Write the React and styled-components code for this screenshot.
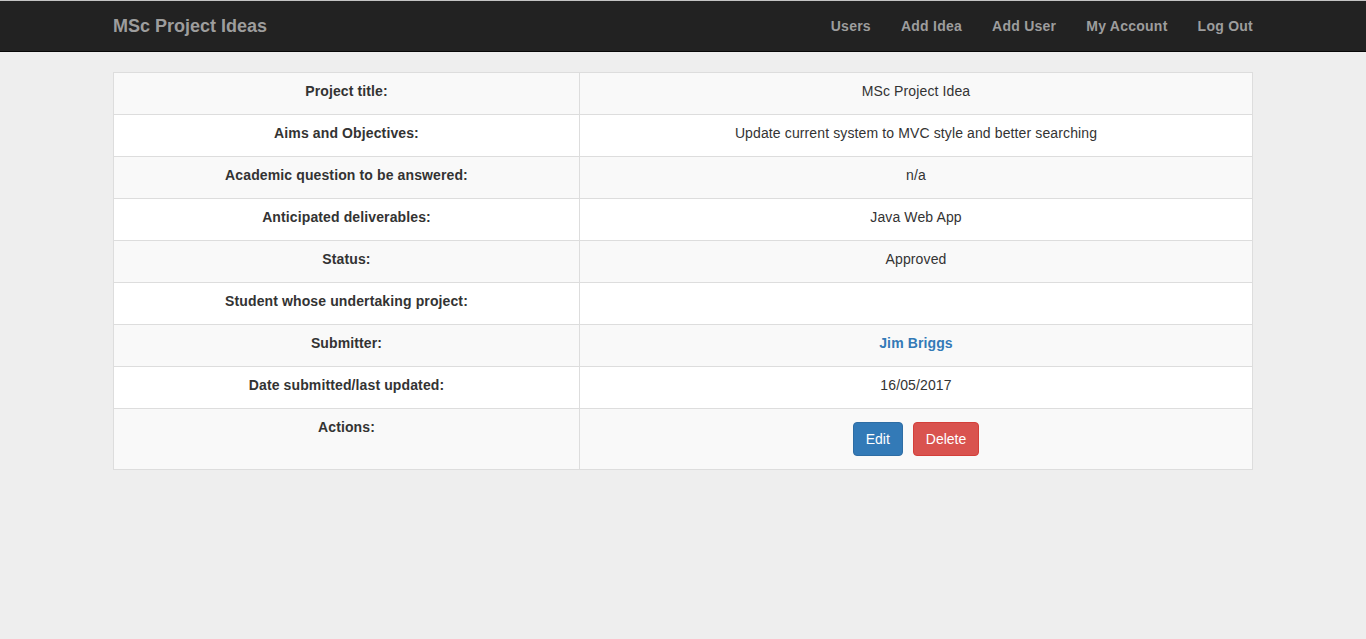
import React from "react";
import styled, { createGlobalStyle } from "styled-components";

const GlobalStyle = createGlobalStyle`
  html, body {
    margin: 0;
    padding: 0;
    background: #eeeeee;
    font-family: "Liberation Sans", Arial, Helvetica, sans-serif;
    font-size: 14px;
    line-height: 20px;
    color: #333333;
    letter-spacing: 0.12px;
  }
  * {
    box-sizing: border-box;
  }
`;

const rows = [
  { label: "Project title:", value: "MSc Project Idea" },
  {
    label: "Aims and Objectives:",
    value: "Update current system to MVC style and better searching",
  },
  { label: "Academic question to be answered:", value: "n/a" },
  { label: "Anticipated deliverables:", value: "Java Web App" },
  { label: "Status:", value: "Approved" },
  { label: "Student whose undertaking project:", value: "" },
  { label: "Submitter:", value: "Jim Briggs", link: true },
  { label: "Date submitted/last updated:", value: "16/05/2017" },
];

const App = () => {
  return (
    <Page>
      <GlobalStyle />
      <Navbar>
        <Container>
          <Brand href="#">MSc Project Ideas</Brand>
          <NavLinks>
            <NavLink href="#">Users</NavLink>
            <NavLink href="#">Add Idea</NavLink>
            <NavLink href="#">Add User</NavLink>
            <NavLink href="#">My Account</NavLink>
            <NavLink href="#" last>
              Log Out
            </NavLink>
          </NavLinks>
        </Container>
      </Navbar>
      <Main>
        <DetailTable>
          <tbody>
            {rows.map((row, i) => (
              <Row key={row.label} striped={i % 2 === 0}>
                <Label>{row.label}</Label>
                <Value>
                  {row.link ? <UserLink href="#">{row.value}</UserLink> : row.value}
                </Value>
              </Row>
            ))}
            <Row striped>
              <Label>Actions:</Label>
              <Value>
                <Actions>
                  <Button variant="primary">Edit</Button>
                  <Button variant="danger">Delete</Button>
                </Actions>
              </Value>
            </Row>
          </tbody>
        </DetailTable>
      </Main>
    </Page>
  );
};

export default App;

const Page = styled.div`
  min-height: 100vh;
  background: #eeeeee;
`;

const Navbar = styled.nav`
  background: #222222;
  border-top: 1px solid #c4c4c4;
  border-bottom: 1px solid #080808;
  height: 52px;
`;

const Container = styled.div`
  width: 1140px;
  margin: 0 auto;
  height: 50px;
  display: flex;
  align-items: center;
  justify-content: space-between;
`;

const Brand = styled.a`
  color: #9d9d9d;
  font-size: 18px;
  font-weight: bold;
  text-decoration: none;
  line-height: 20px;
  letter-spacing: 0;
`;

const NavLinks = styled.div`
  display: flex;
  align-items: center;
`;

const NavLink = styled.a`
  color: #9d9d9d;
  font-weight: bold;
  text-decoration: none;
  padding: 15px;
  padding-right: ${(p) => (p.last ? "0" : "15px")};
  line-height: 20px;
  letter-spacing: 0.25px;
`;

const Main = styled.div`
  width: 1140px;
  margin: 20px auto 0;
`;

const DetailTable = styled.table`
  width: 100%;
  border-collapse: collapse;
  border: 1px solid #dddddd;
  text-align: center;
`;

const Row = styled.tr`
  background: ${(p) => (p.striped ? "#f9f9f9" : "#ffffff")};
`;

const Label = styled.td`
  width: 466px;
  border: 1px solid #dddddd;
  padding: 8px 8px 13px;
  font-weight: bold;
  vertical-align: top;
  line-height: 20px;
`;

const Value = styled.td`
  border: 1px solid #dddddd;
  padding: 8px 8px 13px;
  vertical-align: top;
  line-height: 20px;
`;

const UserLink = styled.a`
  color: #337ab7;
  font-weight: bold;
  text-decoration: none;
`;

const Actions = styled.div`
  display: flex;
  justify-content: center;
  gap: 10px;
  margin: 5px 0 0;
`;

const Button = styled.button`
  font-family: inherit;
  font-size: 14px;
  line-height: 20px;
  padding: 6px 12px;
  border-radius: 4px;
  color: #ffffff;
  cursor: pointer;
  letter-spacing: 0;
  background: ${(p) => (p.variant === "danger" ? "#d9534f" : "#337ab7")};
  border: 1px solid ${(p) => (p.variant === "danger" ? "#d43f3a" : "#2e6da4")};
`;
